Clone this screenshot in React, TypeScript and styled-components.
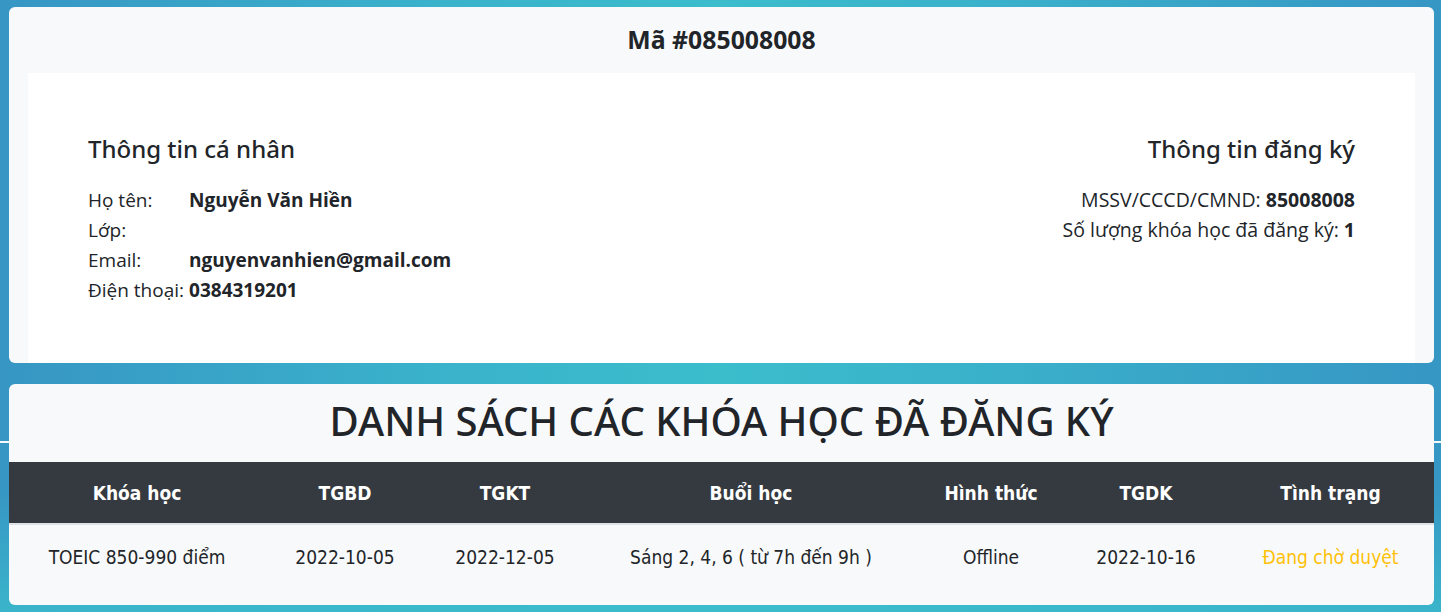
import React from "react";
import styled, { createGlobalStyle } from "styled-components";

const GlobalStyle = createGlobalStyle`
  html, body {
    margin: 0;
    padding: 0;
  }
  body {
    font-family: "Open Sans", "Noto Sans", sans-serif;
    color: #212529;
    background: #3aa6c8;
  }
`;

interface Course {
  name: string;
  start: string;
  end: string;
  schedule: string;
  mode: string;
  registered: string;
  status: string;
}

const courses: Course[] = [
  {
    name: "TOEIC 850-990 điểm",
    start: "2022-10-05",
    end: "2022-12-05",
    schedule: "Sáng 2, 4, 6 ( từ 7h đến 9h )",
    mode: "Offline",
    registered: "2022-10-16",
    status: "Đang chờ duyệt",
  },
];

const columns = [
  { title: "Khóa học", width: 256 },
  { title: "TGBD", width: 160 },
  { title: "TGKT", width: 160 },
  { title: "Buổi học", width: 332 },
  { title: "Hình thức", width: 148 },
  { title: "TGDK", width: 162 },
  { title: "Tình trạng", width: 207 },
];

const App = () => {
  return (
    <Page>
      <GlobalStyle />
      <Card>
        <CardTitle>Mã #085008008</CardTitle>
        <InfoBox>
          <InfoColumn>
            <SectionTitle>Thông tin cá nhân</SectionTitle>
            <DetailGrid>
              <span>Họ tên:</span>
              <b>Nguyễn Văn Hiền</b>
              <span>Lớp:</span>
              <b></b>
              <span>Email:</span>
              <b>nguyenvanhien@gmail.com</b>
              <span>Điện thoại:</span>
              <b>0384319201</b>
            </DetailGrid>
          </InfoColumn>
          <InfoColumn $right>
            <SectionTitle>Thông tin đăng ký</SectionTitle>
            <Line>
              MSSV/CCCD/CMND: <b>85008008</b>
            </Line>
            <Line>
              Số lượng khóa học đã đăng ký: <b>1</b>
            </Line>
          </InfoColumn>
        </InfoBox>
      </Card>

      <Card $table>
        <ListTitle>DANH SÁCH CÁC KHÓA HỌC ĐÃ ĐĂNG KÝ</ListTitle>
        <Table>
          <colgroup>
            {columns.map((c) => (
              <col key={c.title} style={{ width: c.width }} />
            ))}
          </colgroup>
          <thead>
            <tr>
              {columns.map((c) => (
                <Th key={c.title}>{c.title}</Th>
              ))}
            </tr>
          </thead>
          <tbody>
            {courses.map((c, idx) => (
              <tr key={idx}>
                <Td>{c.name}</Td>
                <Td>{c.start}</Td>
                <Td>{c.end}</Td>
                <Td>{c.schedule}</Td>
                <Td>{c.mode}</Td>
                <Td>{c.registered}</Td>
                <Td $status>{c.status}</Td>
              </tr>
            ))}
          </tbody>
        </Table>
      </Card>
    </Page>
  );
};

const Page = styled.div`
  min-height: 612px;
  box-sizing: border-box;
  padding: 7px 7px 7px 9px;
  display: flex;
  flex-direction: column;
  gap: 21px;
  background:
    linear-gradient(
      180deg,
      transparent 441px,
      rgba(255, 255, 255, 0.95) 441px,
      rgba(255, 255, 255, 0.95) 443px,
      transparent 443px
    ),
    linear-gradient(
      180deg,
      rgba(59, 188, 204, 0) 0%,
      rgba(59, 188, 204, 0) 80%,
      rgba(59, 188, 204, 0.8) 100%
    ),
    linear-gradient(90deg, #3796c4 0%, #3ab2cb 30%, #3bbdcc 50%, #3ab0ca 70%, #3696c4 100%);
`;

const Card = styled.div<{ $table?: boolean }>`
  background: #f8f9fa;
  border-radius: 6px;
  overflow: hidden;
  padding: ${(p) => (p.$table ? "0 0 16px" : "0")};
`;

const CardTitle = styled.div`
  height: 66px;
  display: flex;
  align-items: center;
  justify-content: center;
  font-size: 24.8px;
  font-weight: 700;
  padding-bottom: 2px;
  box-sizing: border-box;
`;

const InfoBox = styled.div`
  margin: 0 19px 0 19px;
  background: #ffffff;
  height: 290px;
  box-sizing: border-box;
  padding: 60px 60px 0;
  display: flex;
  justify-content: space-between;
`;

const InfoColumn = styled.div<{ $right?: boolean }>`
  display: flex;
  flex-direction: column;
  align-items: ${(p) => (p.$right ? "flex-end" : "flex-start")};
  text-align: ${(p) => (p.$right ? "right" : "left")};
`;

const SectionTitle = styled.div`
  font-family: "Noto Sans", "Open Sans", sans-serif;
  font-size: 24px;
  font-weight: 500;
  line-height: 32px;
  margin-bottom: 20px;
`;

const DetailGrid = styled.div`
  display: grid;
  grid-template-columns: auto auto;
  column-gap: 5px;
  font-size: 19px;
  line-height: 30px;

  b {
    font-weight: 700;
  }
`;

const Line = styled.div`
  font-size: 19.5px;
  line-height: 30px;
`;

const ListTitle = styled.div`
  height: 78px;
  box-sizing: border-box;
  padding-bottom: 6px;
  display: flex;
  align-items: center;
  justify-content: center;
  font-family: "Noto Sans", "Open Sans", sans-serif;
  font-size: 40px;
  font-weight: 500;
`;

const Table = styled.table`
  width: 100%;
  border-collapse: collapse;
  table-layout: fixed;
  font-family: "DejaVu Sans Condensed", "DejaVu Sans", sans-serif;
`;

const Th = styled.th`
  background: #343a40;
  color: #ffffff;
  font-size: 19px;
  font-weight: 700;
  line-height: 25px;
  padding: 19px 8px 17px;
  border-bottom: 2px solid #dee2e6;
  text-align: center;
`;

const Td = styled.td<{ $status?: boolean }>`
  font-size: 19px;
  line-height: 24px;
  padding: 20px 8px;
  text-align: center;
  color: ${(p) => (p.$status ? "#ffc107" : "#212529")};
`;

export default App;
